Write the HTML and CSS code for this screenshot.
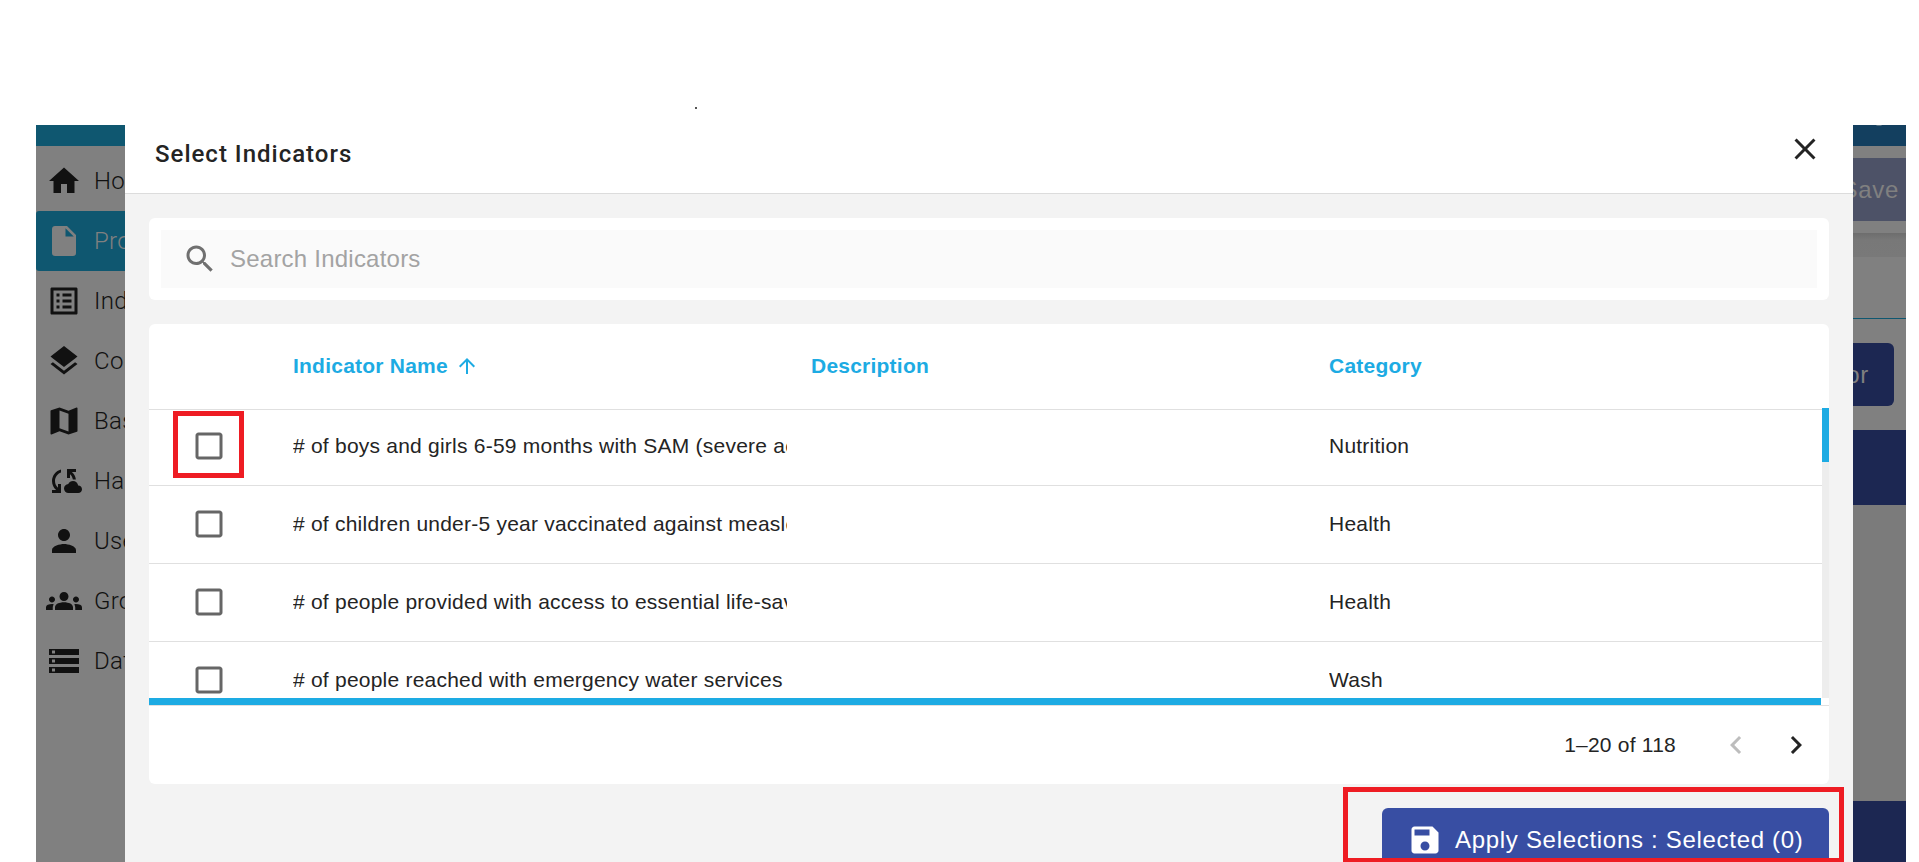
FILE: index.html
```html
<!DOCTYPE html>
<html lang="en">
<head>
<meta charset="utf-8">
<title>Select Indicators</title>
<link rel="stylesheet" href="styles.css">
</head>
<body>
<span class="dot"></span>
<div class="frame">
  <nav class="sidebar">
    <div class="brand-bar"></div>
    <div class="nav-item"><svg class="icon" viewBox="0 0 24 24"><path d="M10 20v-6h4v6h5v-8h3L12 3 2 12h3v8z"/></svg><span>Home</span></div>
    <div class="nav-item active"><svg class="icon" viewBox="0 0 24 24"><path d="M13 9V3.500L18.500 9M6 2c-1.110 0-2 .89-2 2v16a2 2 0 0 0 2 2h12a2 2 0 0 0 2-2V8l-6-6z"/></svg><span>Projects</span></div>
    <div class="nav-item"><svg class="icon" viewBox="0 0 24 24"><path d="M11 7h6v2h-6zm0 4h6v2h-6zm0 4h6v2h-6zM7 7h2v2H7zm0 4h2v2H7zm0 4h2v2H7zM20.100 3H3.900c-.5 0-.9.4-.9.9v16.200c0 .4.400.9.900.9h16.200c.4 0 .9-.5.900-.9V3.900c0-.5-.5-.9-.9-.9zM19 19H5V5h14z"/></svg><span>Indicators</span></div>
    <div class="nav-item"><svg class="icon" viewBox="0 0 24 24"><path d="M11.990 18.540l-7.370-5.730L3 14.070l9 7 9-7-1.630-1.270zM12 16l7.360-5.730L21 9l-9-7-9 7 1.630 1.270z"/></svg><span>Components</span></div>
    <div class="nav-item"><svg class="icon" viewBox="0 0 24 24"><path d="M20.500 3l-.16.030L15 5.100 9 3 3.360 4.900c-.21.070-.36.250-.36.480V20.500c0 .28.220.500.500.500l.16-.03L9 18.900l6 2.100 5.640-1.900c.21-.07.360-.25.360-.48V3.500c0-.28-.22-.5-.5-.5zM15 19l-6-2.110V5l6 2.110z"/></svg><span>Basemaps</span></div>
    <div class="nav-item"><svg class="icon" viewBox="0 0 24 24"><path d="M21.500 14.980c-.02 0-.03 0-.05.010C21.200 13.300 19.760 12 18 12c-1.400 0-2.600.83-3.160 2.020C13.260 14.100 12 15.400 12 17c0 1.660 1.340 3 3 3l6.500-.02c1.380 0 2.500-1.120 2.500-2.500s-1.120-2.500-2.500-2.500zM10 4.260v2.090C7.670 7.180 6 9.390 6 12c0 1.770.78 3.340 2 4.440V14h2v6H4v-2h2.730C5.060 16.540 4 14.400 4 12c0-3.730 2.550-6.850 6-7.740zM20 6h-2.730c1.430 1.260 2.410 3.010 2.660 5h-2.020c-.23-1.360-.93-2.550-1.910-3.440V10h-2V4h6z"/></svg><span>Harvest</span></div>
    <div class="nav-item"><svg class="icon" viewBox="0 0 24 24"><path d="M12 12c2.210 0 4-1.790 4-4s-1.790-4-4-4-4 1.790-4 4 1.790 4 4 4m0 2c-2.670 0-8 1.340-8 4v2h16v-2c0-2.660-5.330-4-8-4"/></svg><span>Users</span></div>
    <div class="nav-item"><svg class="icon" viewBox="0 0 24 24"><path d="M12 12.750c1.630 0 3.070.39 4.240.9 1.080.48 1.760 1.560 1.760 2.730V18H6v-1.610c0-1.180.68-2.260 1.760-2.730 1.170-.52 2.610-.91 4.240-.91zM4 13c1.100 0 2-.9 2-2s-.9-2-2-2-2 .9-2 2 .9 2 2 2zm1.130 1.100C4.760 14.040 4.390 14 4 14c-.99 0-1.930.21-2.780.58C.48 14.900 0 15.620 0 16.430V18h4.500v-1.610c0-.83.23-1.610.63-2.290zM20 13c1.100 0 2-.9 2-2s-.9-2-2-2-2 .9-2 2 .9 2 2 2zm4 3.430c0-.81-.48-1.530-1.220-1.850-.85-.37-1.790-.58-2.780-.58-.39 0-.76.040-1.130.1.400.68.630 1.460.630 2.290V18H24zM12 6c1.660 0 3 1.340 3 3s-1.340 3-3 3-3-1.340-3-3 1.340-3 3-3z"/></svg><span>Groups</span></div>
    <div class="nav-item"><svg class="icon" viewBox="0 0 24 24"><path d="M2 20h20v-4H2zm2-3h2v2H4zM2 4v4h20V4zm4 3H4V5h2zm-4 7h20v-4H2zm2-3h2v2H4z" fill-rule="evenodd"/></svg><span>Datasets</span></div>
  </nav>

  <main class="dialog">
    <header class="dialog-head">
      <h1 class="dialog-title">Select Indicators</h1>
      <svg class="icon close" viewBox="0 0 24 24"><path d="M19 6.410L17.590 5 12 10.590 6.410 5 5 6.410 10.590 12 5 17.590 6.410 19 12 13.410 17.590 19 19 17.590 13.410 12z"/></svg>
    </header>
    <div class="dialog-body">
      <section class="search-card">
        <div class="search-field">
          <svg class="icon" viewBox="0 0 24 24"><path d="M15.500 14h-.79l-.28-.27C15.410 12.590 16 11.110 16 9.500 16 5.910 13.090 3 9.500 3S3 5.910 3 9.500 5.910 16 9.500 16c1.610 0 3.090-.59 4.230-1.570l.27.28v.79l5 4.990L20.490 19zm-6 0C7.010 14 5 11.990 5 9.500S7.010 5 9.500 5 14 7.010 14 9.500 11.990 14 9.500 14z"/></svg>
          <span>Search Indicators</span>
        </div>
      </section>

      <section class="table-card">
        <div class="row table-head">
          <span></span>
          <span class="cell sorted">Indicator Name<svg class="sort" viewBox="0 0 24 24"><path d="M4 12l1.410 1.410L11 7.830V20h2V7.830l5.580 5.590L20 12l-8-8z"/></svg></span>
          <span class="cell">Description</span>
          <span class="cell">Category</span>
        </div>
        <div class="scroller">
          <div class="rows">
            <div class="row"><span class="check marked"><svg class="icon" viewBox="0 0 24 24"><path d="M19 5v14H5V5h14m0-2H5c-1.100 0-2 .9-2 2v14c0 1.100.9 2 2 2h14c1.100 0 2-.9 2-2V5c0-1.100-.9-2-2-2z"/></svg></span><span class="cell"># of boys and girls 6-59 months with SAM (severe acute malnutrition)</span><span class="cell"></span><span class="cell">Nutrition</span></div>
            <div class="row"><span class="check"><svg class="icon" viewBox="0 0 24 24"><path d="M19 5v14H5V5h14m0-2H5c-1.100 0-2 .9-2 2v14c0 1.100.9 2 2 2h14c1.100 0 2-.9 2-2V5c0-1.100-.9-2-2-2z"/></svg></span><span class="cell"># of children under-5 year vaccinated against measles</span><span class="cell"></span><span class="cell">Health</span></div>
            <div class="row"><span class="check"><svg class="icon" viewBox="0 0 24 24"><path d="M19 5v14H5V5h14m0-2H5c-1.100 0-2 .9-2 2v14c0 1.100.9 2 2 2h14c1.100 0 2-.9 2-2V5c0-1.100-.9-2-2-2z"/></svg></span><span class="cell"># of people provided with access to essential life-saving</span><span class="cell"></span><span class="cell">Health</span></div>
            <div class="row"><span class="check"><svg class="icon" viewBox="0 0 24 24"><path d="M19 5v14H5V5h14m0-2H5c-1.100 0-2 .9-2 2v14c0 1.100.9 2 2 2h14c1.100 0 2-.9 2-2V5c0-1.100-.9-2-2-2z"/></svg></span><span class="cell"># of people reached with emergency water services</span><span class="cell"></span><span class="cell">Wash</span></div>
          </div>
          <div class="track"><div class="thumb"></div></div>
        </div>
        <div class="hbar"></div>
        <footer class="pager">
          <span>1–20 of 118</span>
          <svg class="icon disabled" viewBox="0 0 24 24"><path d="M15.410 7.410L14 6l-6 6 6 6 1.410-1.410L10.830 12z"/></svg>
          <svg class="icon" viewBox="0 0 24 24"><path d="M10 6L8.590 7.410 13.170 12l-4.580 4.590L10 18l6-6z"/></svg>
        </footer>
      </section>

      <div class="actions">
        <button class="apply"><svg class="icon" viewBox="0 0 24 24"><path d="M17 3H5c-1.110 0-2 .9-2 2v14c0 1.100.89 2 2 2h14c1.100 0 2-.9 2-2V7zm-5 16c-1.660 0-3-1.340-3-3s1.340-3 3-3 3 1.340 3 3-1.340 3-3 3zm3-10H5V5h10z"/></svg><span>Apply Selections : Selected (0)</span></button>
        <div class="mark"></div>
      </div>
    </div>
  </main>

  <aside class="backdrop">
    <div class="top-bar"></div>
    <div class="save-strip"><div class="save">Save</div></div>
    <div class="gap-strip"></div>
    <div class="tab-strip"></div>
    <div class="add-strip"><div class="add">Indicator</div></div>
    <div class="navy"></div>
    <div class="blank"></div>
    <div class="navy last"></div>
  </aside>
</div>
</body>
</html>
```
FILE: styles.css
```css
*, *::before, *::after { box-sizing: border-box; }
body {
  margin: 0;
  height: 862px;
  padding: 125px 0 0 36px;
  overflow: hidden;
  background: #fff;
  color: #242424;
  font: 21px/30px "Liberation Sans", Arial, sans-serif;
  letter-spacing: 0.225px;
}
.dot { position: absolute; left: 695px; top: 107px; width: 2px; height: 2px; background: #555; }
.icon { width: 36px; height: 36px; flex: none; fill: currentColor; display: block; }
.frame { display: grid; grid-template-columns: 89px 1728px 53px; height: 737px; overflow: hidden; }

.sidebar { background: #808080; overflow: hidden; }
.brand-bar { height: 21px; margin-bottom: 5px; background: #0f5770; }
.nav-item {
  display: flex;
  align-items: center;
  gap: 12px;
  height: 60px;
  padding-left: 10px;
  color: #111;
  font: 300 24px/36px Roboto, sans-serif;
  letter-spacing: 0.3px;
}
.nav-item.active { background: #0f5770; color: #808080; border-radius: 3px 0 0 3px; }

.dialog { display: flex; flex-direction: column; background: #f3f3f3; overflow: hidden; }
.dialog-head {
  display: flex;
  flex: none;
  justify-content: space-between;
  height: 69px;
  padding: 6px 30px 0;
  background: #fff;
  border-bottom: 1px solid #dcdcdc;
}
.dialog-title { margin: 5px 0 0; font: 500 24px/36px Roboto, sans-serif; letter-spacing: 1px; }
.dialog-body { flex: none; padding: 24px 24px 0; }

.search-card { height: 82px; padding: 12px; background: #fff; border-radius: 6px; }
.search-field {
  display: flex;
  align-items: center;
  gap: 12px;
  height: 58px;
  padding-left: 21px;
  background: #fafafa;
  color: #a3a3a3;
  font-size: 24px;
}
.search-field .icon { color: #707070; }

.table-card { margin-top: 24px; height: 460px; background: #fff; border-radius: 6px; }
.row {
  display: grid;
  grid-template-columns: 132px 518px 518px 505px;
  align-items: center;
  width: 1673px;
  height: 78px;
  padding-bottom: 1px;
  border-bottom: 1px solid #e0e0e0;
}
.table-head { position: relative; z-index: 1; height: 86px; color: #1dabe3; font-weight: bold; }
.cell { margin: 0 12px; overflow: hidden; white-space: nowrap; }
.sorted { display: flex; align-items: center; }
.sort { width: 24px; height: 24px; margin-left: 7px; fill: currentColor; }
.scroller { display: flex; height: 290px; margin-top: -2px; overflow: hidden; }
.rows { width: 1673px; }
.track { position: relative; z-index: 2; width: 7px; background: #ededed; }
.thumb { height: 54px; background: #1dabe3; }
.check { position: relative; padding-left: 42px; color: #666; }
.marked::after {
  content: "";
  position: absolute;
  left: 24px;
  top: -17px;
  width: 71px;
  height: 67px;
  border: 5px solid #ee1c23;
}
.hbar { width: 1672px; height: 7px; background: #1dabe3; }
.pager {
  display: flex;
  align-items: center;
  justify-content: flex-end;
  height: 79px;
  padding-right: 15px;
  border-top: 1px solid #e0e0e0;
}
.pager .disabled { color: #bdbdbd; margin: 0 24px 0 42px; }

.actions { position: relative; display: flex; justify-content: flex-end; padding-top: 24px; }
.apply {
  display: flex;
  align-items: center;
  gap: 12px;
  width: 447px;
  height: 63px;
  padding: 0 0 0 25px;
  border: 0;
  border-radius: 6px;
  background: #384ea3;
  color: #fff;
  font: 24px/36px "Liberation Sans", Arial, sans-serif;
  letter-spacing: 0.7px;
  white-space: nowrap;
}
.mark {
  position: absolute;
  top: 3px;
  right: -15px;
  width: 501px;
  height: 75px;
  border: 5px solid #ee1c23;
  border-bottom-width: 4px;
}

.backdrop { background: #808080; font-size: 24px; letter-spacing: 0.69px; color: #808080; overflow: hidden; }
.top-bar { height: 21px; background: radial-gradient(ellipse 4px 1px at 26px 0, #5b7484 60%, transparent), #133f5f; }
.save-strip { height: 87px; padding: 12px 0; }
.save { display: flex; align-items: center; justify-content: flex-end; height: 63px; padding-right: 7px; background: #4d5267; }
.gap-strip { height: 24px; background: linear-gradient(#6d6d6d, #787878 7px, #797979); }
.tab-strip { height: 62px; border-bottom: 1px solid #0f5770; }
.add-strip { height: 111px; padding: 24px 12px 24px 0; }
.add { display: flex; align-items: center; justify-content: flex-end; height: 63px; padding-right: 25px; border-radius: 0 6px 6px 0; background: #1c2752; }
.navy { height: 75px; background: #1c2752; }
.blank { height: 296px; background: #7b7b7b; }
.last { height: 61px; }
```
